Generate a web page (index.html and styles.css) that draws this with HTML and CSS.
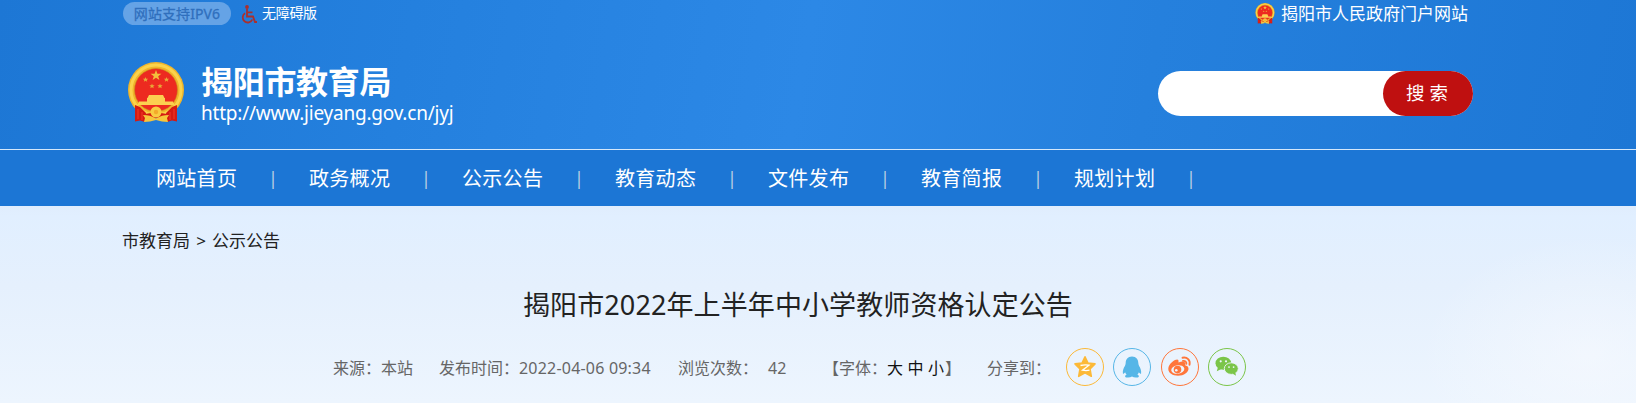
FILE: index.html
```
<!DOCTYPE html>
<html lang="zh-CN">
<head>
    <meta charset="utf-8">
    <title>揭阳市教育局</title>
    <link rel="stylesheet" href="styles.css">
</head>
<body>
    <svg class="defs" width="0" height="0">
        <symbol id="emblem" viewBox="0 0 56 61">
            <circle cx="28" cy="28" r="28" fill="#f0b52b"/>
            <circle cx="28" cy="28" r="25" fill="none" stroke="#fbd34b" stroke-width="3"/>
            <circle cx="28" cy="28" r="21.500" fill="#ed2a20" stroke="#c98b1c" stroke-width="0.600"/>
            <path d="M28 8l1.400 3.800h4l-3.200 2.400 1.200 3.900-3.400-2.400-3.400 2.400 1.200-3.900-3.200-2.400h4z" fill="#f2c03c"/>
            <path id="s" d="M17.500 15l.7 1.700h2l-1.500 1.200.5 1.900-1.700-1.100-1.700 1.100.5-1.900-1.500-1.200h2z" fill="#e8ac38"/>
            <use href="#s" x="21"/>
            <use href="#s" x="6.500" y="6.500"/>
            <use href="#s" x="14.500" y="6.500"/>
            <path d="M21 33h14l1.500 3h-17zM19 36h18v3.500h8l1.500 3.500h-37l1.500-3.500h8z" fill="#fcd050"/>
            <path d="M7 43l5 2 6 6-1 9-5-1.500-5 1z" fill="#d51a12"/>
            <path d="M49 43l-5 2-6 6 1 9 5-1.500 5 1z" fill="#d51a12"/>
            <path d="M10 47v10M14 50v8M46 47v10M42 50v8" stroke="#ee3524" stroke-width="1.200"/>
            <path d="M17 52l6-1 5 3 5-3 6 1-2 4H19z" fill="#d51a12"/>
            <circle cx="28" cy="50" r="5.500" fill="#f9cc42"/>
            <circle cx="28" cy="50" r="2.200" fill="#f3a92b"/>
            <path d="M15 53c5 0 9 1 13 3.500 4-2.500 8-3.500 13-3.500l-2 3 1 4c-4 0-8-1-12-2-4 1-8 2-12 2l1-4z" fill="#f7c63b"/>
        </symbol>
    </svg>

    <header class="header">
        <div class="topbar">
            <span class="ipv6">网站支持IPV6</span>
            <svg class="wheelchair" viewBox="0 0 16 19" fill="none" stroke="#a9302d" stroke-width="1.800">
                <circle cx="6" cy="2" r="1.900" fill="#a9302d" stroke="none"/>
                <path d="M6 4v7.500h6l2 5.500h2M6.500 7.300h5"/>
                <path d="M4 8.300a5 5 0 1 0 7.300 6.200"/>
            </svg>
            <a class="barrier-free">无障碍版</a>
            <a class="portal">
                <svg class="portal-emblem"><use href="#emblem"/></svg>
                <span>揭阳市人民政府门户网站</span>
            </a>
        </div>
        <div class="banner">
            <svg class="logo"><use href="#emblem"/></svg>
            <div class="site">
                <h1>揭阳市教育局</h1>
                <p>http://www.jieyang.gov.cn/jyj</p>
            </div>
            <form class="search">
                <input type="text">
                <button type="button">搜 索</button>
            </form>
        </div>
    </header>

    <nav class="nav">
        <ul>
            <li><a>网站首页</a><span>|</span></li>
            <li><a>政务概况</a><span>|</span></li>
            <li><a>公示公告</a><span>|</span></li>
            <li><a>教育动态</a><span>|</span></li>
            <li><a>文件发布</a><span>|</span></li>
            <li><a>教育简报</a><span>|</span></li>
            <li><a>规划计划</a><span>|</span></li>
        </ul>
    </nav>

    <main class="content">
        <div class="crumbs"><a>市教育局</a><span>&gt;</span><a>公示公告</a></div>
        <h2>揭阳市2022年上半年中小学教师资格认定公告</h2>
        <div class="meta">
            <span class="source">来源：本站</span>
            <span class="date">发布时间：<span class="time">2022-04-06 09:34</span></span>
            <span class="views">浏览次数：</span>
            <span class="count">42</span>
            <span class="font-size">【字体：<a>大</a><a>中</a><a>小</a>】</span>
            <span class="share-label">分享到：</span>
            <div class="share">
                <a class="qzone">
                    <svg viewBox="0 0 36 36">
                        <path d="M18 7.800l3 6.200 7 .9-5 5.100 1.300 7.300-6.300-3.400-6.300 3.400L13 20l-5-5.100 7-.9z" fill="#fcb938" stroke="#fcb938" stroke-width="1.600" stroke-linejoin="round"/>
                        <path d="M13.500 16.500c3-.8 6-.8 8.500-.3l-6.500 5c2.500.5 4.500.5 7 0" fill="none" stroke="#fff" stroke-width="1.300"/>
                    </svg>
                </a>
                <a class="qq">
                    <svg viewBox="0 0 36 36">
                        <path d="M18 7.500c-4.300 0-6.300 3-6.300 6.500 0 1-.4 1.800-.8 3-1.300 2-2.400 4.500-2 7.500.3.700 1.200.2 2.200-1.200.3 1 .8 1.700 1.500 2.400-2.200.8-2 2.600.5 2.800 2 .2 3.700-.2 4.900-1 1.200.8 2.900 1.200 4.900 1 2.500-.2 2.700-2 .5-2.800.7-.7 1.200-1.400 1.500-2.400 1 1.400 1.900 1.900 2.200 1.200.4-3-.7-5.500-2-7.500-.4-1.200-.8-2-.8-3 0-3.500-2-6.500-6.300-6.500z" fill="#56b6e7"/>
                    </svg>
                </a>
                <a class="weibo">
                    <svg viewBox="0 0 36 36">
                        <path d="M16.500 12.500c.3-2-1-2.700-3.500-1.500-3.500 1.800-6.700 5.500-6.700 9 0 4 4.500 6.700 9.700 6.700 6 0 10.500-3.500 10.500-7 0-2.200-1.600-3-3.400-3.500.8-3-1-4.800-6.600-2.700z" fill="#ff763b"/>
                        <ellipse cx="15.800" cy="20.500" rx="6.600" ry="4.300" fill="#edf5fe" transform="rotate(-8 15.800 20.500)"/>
                        <circle cx="15.500" cy="20.600" r="3.800" fill="#ff763b"/>
                        <circle cx="14.300" cy="21.300" r="1.300" fill="#edf5fe"/>
                        <path d="M20.500 8.700c4.700-1 8 2.500 7 7M21 11.900c2.300-.3 3.700 1.100 3.300 3" fill="none" stroke="#ff763b" stroke-width="1.900" stroke-linecap="round"/>
                    </svg>
                </a>
                <a class="wechat">
                    <svg viewBox="0 0 36 36">
                        <ellipse cx="14.300" cy="14.200" rx="7.800" ry="6.500" fill="#7bc549"/>
                        <path d="M9 18l-1.200 4.200 4.500-2.200z" fill="#7bc549"/>
                        <ellipse cx="22.300" cy="19.600" rx="7" ry="5.800" fill="#7bc549" stroke="#edf5fe" stroke-width=".9"/>
                        <path d="M23.500 24.500l3.500 2.200-.8-3.500z" fill="#7bc549"/>
                        <g fill="#edf5fe">
                            <circle cx="11.700" cy="12.300" r="1.100"/><circle cx="17" cy="12.300" r="1.100"/>
                            <circle cx="20" cy="18.100" r=".9"/><circle cx="24.600" cy="18.100" r=".9"/>
                        </g>
                    </svg>
                </a>
            </div>
        </div>
    </main>
</body>
</html>
```

FILE: styles.css
```
* {
    box-sizing: border-box;
}

body {
    margin: 0;
    font-family: "Noto Sans", "Noto Sans CJK SC", sans-serif;
    background-color: #edf5fe;
    color: #222;
    overflow: hidden;
}

h1, h2, p, ul {
    margin: 0;
    padding: 0;
    font-weight: normal;
}

.defs {
    display: block;
}

.header {
    height: 150px;
    padding-left: 123px;
    background: linear-gradient(100deg, #1d77d5 0%, #2480de 25%, #2c88e6 49%, #2580dd 70%, #1d77d5 100%);
    border-bottom: 1px solid #d5e8fb;
}

.topbar {
    display: flex;
    width: 1350px;
    height: 27px;
    color: #fff;
}

.ipv6 {
    width: 108px;
    height: 23px;
    margin-top: 2px;
    border-radius: 12px;
    background-color: #65a3e6;
    color: #2f6fbd;
    font-size: 14px;
    line-height: 24px;
    letter-spacing: 0.1px;
    text-align: center;
    -webkit-text-stroke: 0.3px #2f6fbd;
}

.wheelchair {
    width: 16px;
    height: 19px;
    margin: 5px 0 0 10px;
}

.barrier-free {
    margin-left: 5px;
    font-size: 14px;
    line-height: 26px;
    letter-spacing: -0.3px;
}

.portal {
    display: flex;
    margin-left: auto;
    margin-right: 5px;
    font-size: 17px;
    line-height: 28px;
}

.portal-emblem {
    width: 20px;
    height: 21px;
    margin: 3px 6px 0 0;
}

.banner {
    display: flex;
    width: 1350px;
    padding-top: 35px;
}

.logo {
    width: 56px;
    height: 61px;
    margin-left: 5px;
}

.site {
    margin-left: 17px;
    color: #fff;
}

.site h1 {
    font-size: 32px;
    font-weight: bold;
    line-height: 40px;
    letter-spacing: -0.3px;
}

.site p {
    font-size: 19px;
    line-height: 22px;
    letter-spacing: -0.22px;
}

.search {
    display: flex;
    width: 315px;
    height: 45px;
    margin: 9px 0 0 auto;
    border-radius: 23px;
    background-color: #fff;
}

.search input {
    width: 225px;
    border: none;
    outline: none;
    background: none;
}

.search button {
    width: 90px;
    padding: 0 2px 4px 0;
    border: none;
    border-radius: 23px;
    background-color: #bf1010;
    color: #fff;
    font-family: inherit;
    font-size: 18.5px;
}

.nav {
    height: 56px;
    padding-left: 123px;
    background-color: #1c76d5;
}

.nav ul {
    display: flex;
    list-style: none;
}

.nav li {
    display: flex;
    width: 153px;
    padding-left: 33px;
    color: #fff;
    font-size: 20px;
    line-height: 58px;
    white-space: nowrap;
}

.nav li a {
    width: 81px;
    letter-spacing: 0.3px;
}

.nav li span {
    width: 5px;
    margin-left: 31px;
    color: #b9cde2;
    font-size: 18px;
    line-height: 57px;
}

.content {
    height: 197px;
    padding-left: 123px;
    background:
        radial-gradient(ellipse 170px 120px at 1590px 150px, rgba(250, 251, 255, 0.5), rgba(250, 251, 255, 0)),
        linear-gradient(#e0edfd 0, #e1efff 10px, #e5f0fd 80px, #edf5fe 100%);
}

.crumbs {
    display: flex;
    margin-left: -1px;
    padding-top: 22px;
    font-size: 17px;
    line-height: 26px;
}

.crumbs span {
    width: 22px;
    text-align: center;
}

.content h2 {
    width: 1350px;
    margin-top: 32px;
    font-size: 27px;
    line-height: 38px;
    letter-spacing: 0.1px;
    text-align: center;
}

.meta {
    display: flex;
    height: 38px;
    margin-top: 24px;
    padding-left: 210px;
    color: #666;
    font-size: 16px;
    line-height: 40px;
    white-space: nowrap;
}

.source {
    width: 106px;
}

.date {
    width: 239px;
}

.time {
    letter-spacing: 0.2px;
}

.views {
    width: 90px;
}

.count {
    width: 55px;
}

.font-size {
    width: 164px;
}

.font-size a {
    margin-right: 4.5px;
    color: #111;
}

.font-size a:last-child {
    margin-right: 1px;
}

.share-label {
    width: 79px;
}

.share {
    display: flex;
    gap: 9.4px;
}

.share a {
    width: 38px;
    height: 38px;
    border: 1px solid;
    border-radius: 50%;
}

.share svg {
    display: block;
    width: 36px;
    height: 36px;
}

.qzone {
    color: #fcb938;
}

.qq {
    color: #56b6e7;
}

.weibo {
    color: #ff763b;
}

.wechat {
    color: #7bc549;
}
```
